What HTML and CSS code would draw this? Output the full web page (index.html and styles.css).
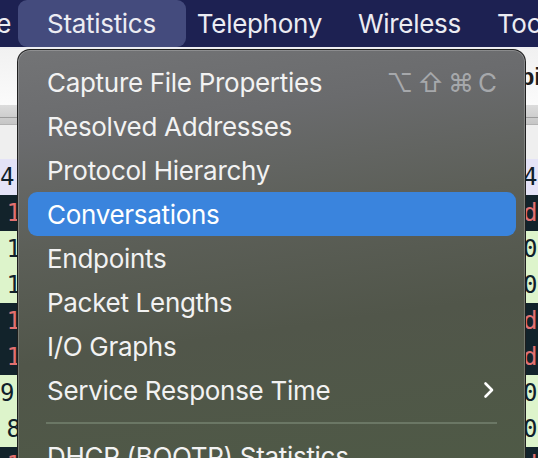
FILE: index.html
```html
<!DOCTYPE html>
<html lang="en">
<head>
<meta charset="utf-8">
<title>Statistics menu</title>
<link rel="stylesheet" href="styles.css">
</head>
<body>
<div class="screen">
  <header class="menubar">
    <div class="mb-clip"><span>Analyze</span></div>
    <div class="mb-item mb-active">Statistics</div>
    <div class="mb-item mb-first">Telephony</div>
    <div class="mb-item">Wireless</div>
    <div class="mb-item">Tools</div>
  </header>

  <main class="window">
    <div class="toolbar"><span class="tb-text">pi</span></div>
    <div class="filterbar"><div class="filter-line"></div></div>
    <div class="listhead"></div>
    <div class="rows">
      <div class="row lav"><span class="no end-early">4</span><span></span><span class="tail">4</span></div>
      <div class="row dark"><span class="no">1</span><span></span><span class="tail">d</span></div>
      <div class="row green"><span class="no">1</span><span></span><span class="tail">0</span></div>
      <div class="row green"><span class="no">1</span><span></span><span class="tail">0</span></div>
      <div class="row dark"><span class="no">1</span><span></span><span class="tail">d</span></div>
      <div class="row dark"><span class="no">1</span><span></span><span class="tail">d</span></div>
      <div class="row green"><span class="no end-early">9</span><span></span><span class="tail">0</span></div>
      <div class="row green"><span class="no">8</span><span></span><span class="tail">0</span></div>
      <div class="row dark"><span class="no">1</span><span></span><span class="tail">d</span></div>
    </div>
  </main>

  <nav class="menu">
    <div class="item"><span>Capture File Properties</span><span class="shortcut">⌥⇧⌘C</span></div>
    <div class="item"><span>Resolved Addresses</span></div>
    <div class="item"><span>Protocol Hierarchy</span></div>
    <div class="item selected"><span>Conversations</span></div>
    <div class="item"><span>Endpoints</span></div>
    <div class="item"><span>Packet Lengths</span></div>
    <div class="item"><span>I/O Graphs</span></div>
    <div class="item"><span>Service Response Time</span>
      <svg class="chev" width="12" height="18" viewBox="0 0 12 18"><polyline points="2.5,2.5 9,9 2.5,15.5" fill="none" stroke="#ffffff" stroke-width="2.6" stroke-linecap="round" stroke-linejoin="round"/></svg>
    </div>
    <div class="sep"><div class="sep-line"></div></div>
    <div class="item"><span>DHCP (BOOTP) Statistics</span></div>
  </nav>
</div>
</body>
</html>
```

FILE: styles.css
```css
html, body {
  margin: 0;
  padding: 0;
}

body {
  width: 538px;
  height: 458px;
  overflow: hidden;
  background: #ffffff;
  font-family: "Inter", "Noto Sans", "DejaVu Sans", sans-serif;
}

.screen {
  position: relative;
  width: 538px;
  height: 458px;
  overflow: hidden;
}

/* ---------- menu bar ---------- */
.menubar {
  height: 47px;
  background: #1d2152;
  border-bottom: 2px solid #eeeef2;
  display: flex;
  align-items: center;
  color: #ececf2;
  font-size: 26px;
  letter-spacing: -0.3px;
  white-space: nowrap;
}

.mb-clip {
  flex: none;
  width: 11px;
  overflow: hidden;
  display: flex;
  justify-content: flex-end;
}

.mb-item {
  flex: none;
  margin-left: 36px;
}

.mb-active {
  margin-left: 7px;
  height: 47px;
  padding: 0 30px 0 29px;
  display: flex;
  align-items: center;
  background: #444b7d;
  border-radius: 9px;
}

.mb-first {
  margin-left: 11px;
}

/* ---------- window behind ---------- */
.window {
  display: flex;
  flex-direction: column;
}

.toolbar {
  height: 56px;
  background: linear-gradient(#f1f1f1, #fbfbfb);
  display: flex;
  align-items: center;
  justify-content: flex-end;
}

.tb-text {
  margin-right: -3px;
  font-family: "Liberation Sans", sans-serif;
  font-weight: bold;
  font-size: 24px;
  color: #1e1e1e;
}

.filterbar {
  height: 20px;
  background: linear-gradient(#dcdcdc, #c6c6c6);
  border-bottom: 1px solid #b3b3b3;
  display: flex;
  flex-direction: column;
  justify-content: flex-end;
  padding-bottom: 6px;
  box-sizing: border-box;
}

.filter-line {
  height: 1px;
  background: #9c9c9c;
}

.listhead {
  height: 34px;
  background: #efefef;
}

.rows {
  display: flex;
  flex-direction: column;
}

.row {
  height: 36px;
  display: grid;
  grid-template-columns: 21px 502px 1fr;
  align-items: center;
  font-family: "DejaVu Sans Mono", "Liberation Mono", monospace;
  font-size: 24px;
  white-space: nowrap;
}

.no {
  text-align: right;
}

.end-early {
  margin-right: 15px;
}

.lav { background: #e4e3f7; color: #10202a; }
.dark { background: #12232b; color: #e27070; }
.green { background: #ddf4cb; color: #10202a; }

/* ---------- dropdown menu ---------- */
.menu {
  position: absolute;
  left: 17px;
  top: 49px;
  width: 509px;
  height: 440px;
  box-sizing: border-box;
  padding: 10px 9px 0 10px;
  border: 1px solid rgba(24, 24, 24, 0.9);
  border-radius: 13px;
  box-shadow: inset 0 0 0 1px rgba(255, 255, 255, 0.2);
  background: linear-gradient(172deg, #737476 0%, #6a6b6d 18%, #5c5f58 40%, #51564a 62%, #4e5a45 100%);
  display: flex;
  flex-direction: column;
}

.item {
  height: 44px;
  flex: none;
  display: flex;
  align-items: center;
  padding: 0 19px;
  border-radius: 9px;
  color: #f2f2f2;
  font-size: 26px;
  letter-spacing: -0.3px;
  white-space: nowrap;
}

.item.selected {
  background: #3a84dd;
  color: #ffffff;
}

.shortcut {
  margin-left: auto;
  color: #a6a8ab;
  letter-spacing: 4px;
  margin-right: -4px;
}

.chev {
  margin-left: auto;
  margin-right: 2px;
  display: block;
}

.sep {
  height: 22px;
  flex: none;
  display: flex;
  align-items: center;
  padding: 0 19px 0 18px;
}

.sep-line {
  flex: 1;
  height: 2px;
  background: #6b7765;
}
```
